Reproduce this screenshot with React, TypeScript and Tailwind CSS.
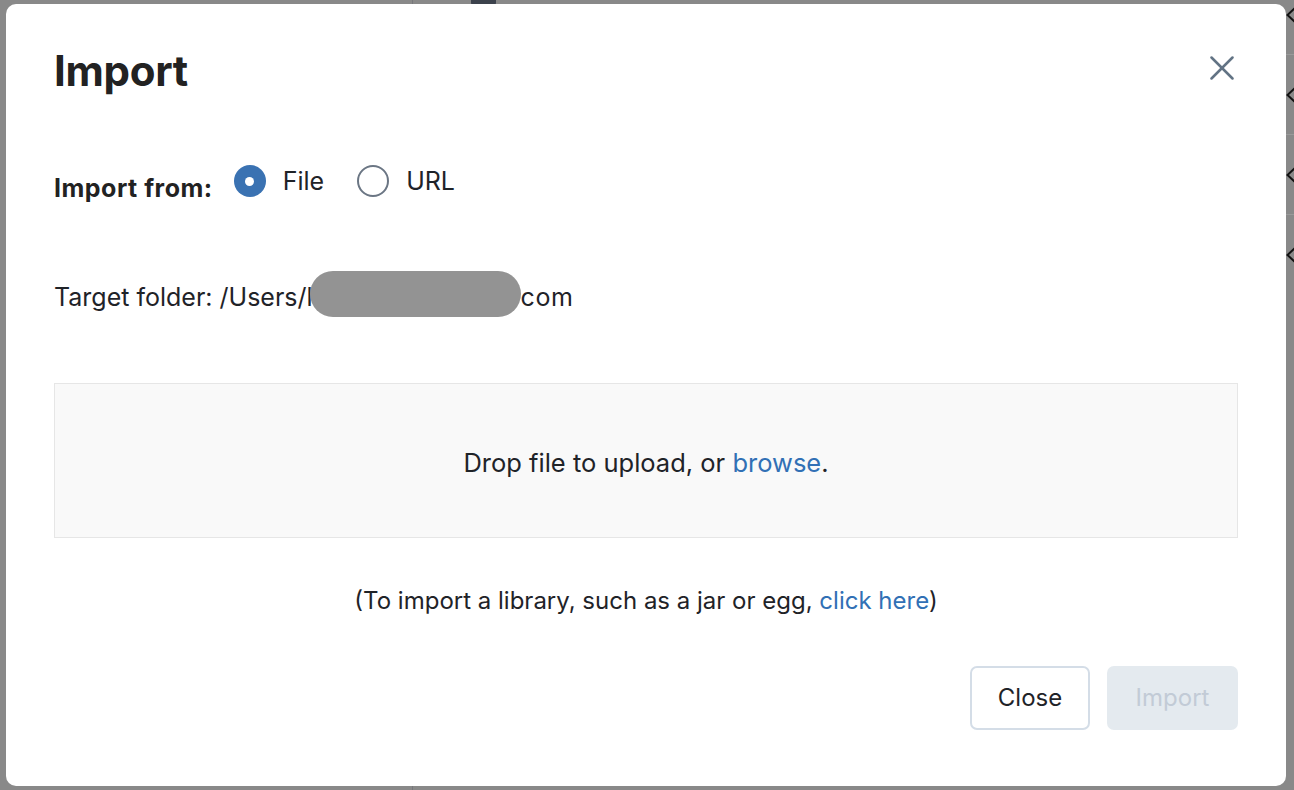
import { useState } from "react"

function CloseIcon() {
  return (
    <svg width="24" height="24" viewBox="0 0 24 24" fill="none" stroke="#627384" strokeWidth="2.5" strokeLinecap="round">
      <path d="M1.5 1.5 L22.5 22.5" />
      <path d="M22.5 1.5 L1.5 22.5" />
    </svg>
  )
}

function Radio({ checked, label, onClick }: { checked: boolean; label: string; onClick: () => void }) {
  return (
    <button type="button" onClick={onClick} className="flex items-center gap-[17px] text-[25px] leading-[36px] text-[#1f2328]">
      {checked ? (
        <span className="flex h-[32px] w-[32px] items-center justify-center rounded-full bg-[#3a72b2]">
          <span className="h-[9px] w-[9px] rounded-full bg-white" />
        </span>
      ) : (
        <span className="h-[32px] w-[32px] rounded-full border-2 border-[#6b7684] bg-white" />
      )}
      <span>{label}</span>
    </button>
  )
}

export default function App() {
  const [source, setSource] = useState<"file" | "url">("file")

  return (
    <div className="relative h-[790px] w-[1294px] overflow-hidden bg-[#898989] font-['Inter',sans-serif]">
      {/* dimmed page behind the dialog */}
      <div className="flex h-full">
        <div className="w-[413px] border-r border-[#77787c]" />
        <div className="flex-1">
          <div className="ml-[58px] h-[5px] w-[25px] rounded-b-[2px] bg-[#3c424c]" />
        </div>
        <div className="w-[8px] overflow-hidden">
          <div className="mt-[-25px]">
            {[0, 1, 2, 3].map((i) => (
              <div key={i} className="flex h-[80px] items-center border-b border-[#9a9a9a] last:border-b-0">
                <svg width="12" height="18" viewBox="0 0 12 18" fill="none" stroke="#111" strokeWidth="2" className="shrink-0">
                  <path d="M10 1 L1.5 9 L10 17" />
                </svg>
              </div>
            ))}
          </div>
        </div>
      </div>

      {/* dialog */}
      <div className="absolute left-[6px] top-[4px] h-[782px] w-[1280px] rounded-[10px] bg-white px-12 pt-[46px] text-[#1f2328]">
        <div className="flex items-start justify-between">
          <h1 className="text-[42px] font-bold leading-[42px] tracking-[-0.3px] text-[#222]">Import</h1>
          <button type="button" className="mr-[4px] mt-[6px]">
            <CloseIcon />
          </button>
        </div>

        <div className="mt-[71px] flex items-start">
          <span className="mt-[7px] text-[25px] font-bold leading-[36px] tracking-[0.5px] text-[#222]">Import from:</span>
          <div className="ml-[21px] flex items-center gap-[33px]">
            <Radio checked={source === "file"} label="File" onClick={() => setSource("file")} />
            <Radio checked={source === "url"} label="URL" onClick={() => setSource("url")} />
          </div>
        </div>

        <div className="mt-[65px] flex h-[46px] items-center text-[25px] leading-[36px]">
          <span className="pt-[5px]">Target folder: /Users/l</span>
          <span className="-ml-[3px] h-[46px] w-[211px] rounded-full bg-[#939393]" />
          <span className="pt-[5px] tracking-[0.5px]">com</span>
        </div>

        <div className="mt-[66px] flex h-[155px] items-center justify-center border border-[#e6e6e6] bg-[#f9f9f9] pt-[4px] text-[25.5px] leading-[36px]">
          <span>
            Drop file to upload, or <a className="cursor-pointer text-[#3170b5]">browse</a>.
          </span>
        </div>

        <p className="mt-[45px] text-center text-[24px] leading-[36px]">
          (To import a library, such as a jar or egg, <a className="cursor-pointer text-[#3170b5]">click here</a>)
        </p>

        <div className="mt-[47px] flex justify-end gap-[17px]">
          <button type="button" className="h-[64px] w-[120px] rounded-[7px] border-2 border-[#d4dde7] bg-white text-[24px] text-[#1f2328]">
            Close
          </button>
          <button type="button" disabled className="h-[64px] w-[131px] rounded-[7px] bg-[#e4eaef] text-[24px] text-[#c2cbd6]">
            Import
          </button>
        </div>
      </div>
    </div>
  )
}
